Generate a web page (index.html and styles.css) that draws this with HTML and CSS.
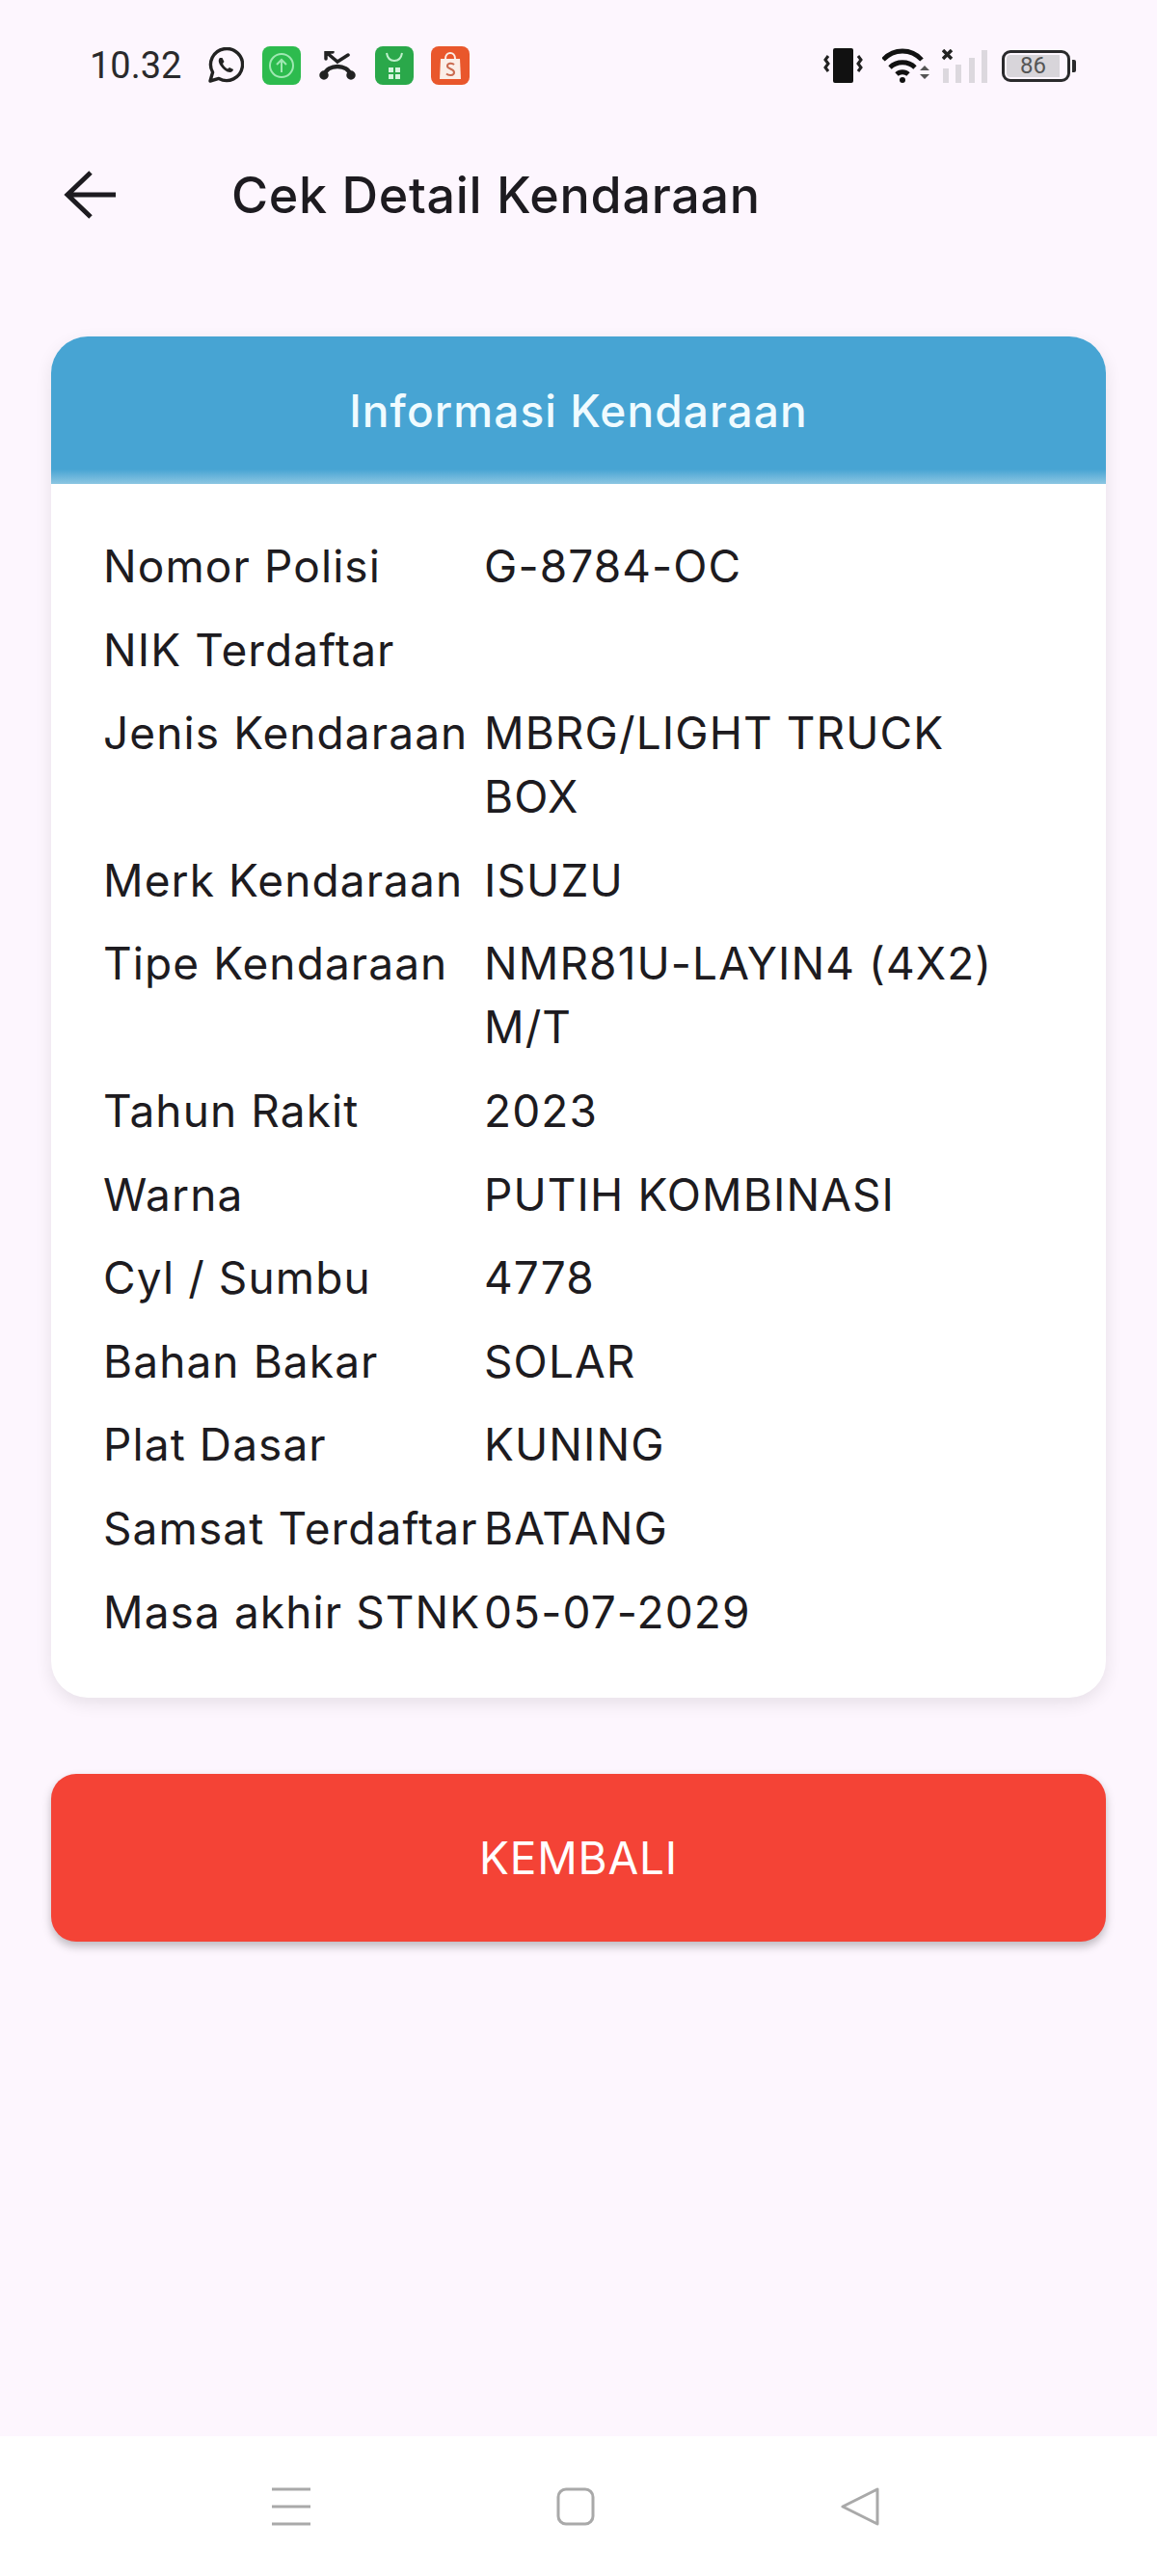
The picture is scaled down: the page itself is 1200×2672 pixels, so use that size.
FILE: index.html
```html
<!DOCTYPE html>
<html lang="id">
<head>
    <meta charset="UTF-8">
    <meta name="viewport" content="width=device-width, initial-scale=1.0">
    <title>Cek Detail Kendaraan</title>
    <link rel="stylesheet" href="styles.css">
</head>
<body>

    <!-- Status bar -->
    <div class="status-bar">
        <div class="status-left">
            <span class="clock">10.32</span>
            <svg class="ic-wa" viewBox="0 0 38 38" fill="none" stroke="#222" stroke-width="3.4">
                <path d="M3 35l2.6-9A16.5 16.5 0 1 1 12 32.400z" stroke-linejoin="round"/>
                <path d="M13 11c-2 2-1.500 5 1 8.500s6 6.500 9.500 6.500c2 0 3.500-1.500 3.500-3l-4-2-2 1.500c-2-1-4-3-5-5.500l1.500-2-2-4z" fill="#222" stroke="none"/>
            </svg>
            <svg class="ic-app" viewBox="0 0 40 40">
                <rect width="40" height="40" rx="8" fill="#2dbb4e"/>
                <circle cx="20" cy="20" r="12" fill="none" stroke="#9fe8b2" stroke-width="2"/>
                <path d="M20 27V14M15 19l5-5 5 5" fill="none" stroke="#9fe8b2" stroke-width="2"/>
            </svg>
            <svg class="ic-call" viewBox="0 0 40 30" fill="none" stroke="#222" stroke-width="3.500" stroke-linecap="round">
                <path d="M8 1l12 10L31 4M8 1v7M8 1h7"/>
                <path d="M6 25c2-6 8-9 14-9s12 3 14 9" stroke-width="4.500"/>
                <circle cx="6" cy="25" r="3" fill="#222"/>
                <circle cx="34" cy="25" r="3" fill="#222"/>
            </svg>
            <svg class="ic-app" viewBox="0 0 40 40">
                <rect width="40" height="40" rx="8" fill="#2aa84a"/>
                <path d="M12 7c1 6 4 8 8 8s7-2 8-8" fill="none" stroke="#bff0cc" stroke-width="2"/>
                <path d="M14 22h5v5h-5zM21 22h5v5h-5zM14 29h5v5h-5zM21 29h5v5h-5z" fill="#d6f5df"/>
            </svg>
            <svg class="ic-app" viewBox="0 0 40 40">
                <rect width="40" height="40" rx="8" fill="#e9572c"/>
                <path d="M10 13h20l1 21H9z" fill="#fbeee8"/>
                <path d="M15 13c0-8 10-8 10 0" fill="none" stroke="#fbeee8" stroke-width="2"/>
                <path d="M24 19c-2-2-7-2-7 1.500s7 2.500 7 6.500-6 3.500-8 1.500" fill="none" stroke="#c9694e" stroke-width="2"/>
            </svg>
        </div>
        <div class="status-right">
            <svg class="ic-vib" viewBox="0 0 41 36">
                <rect x="10" y="0" width="21" height="36" rx="2" fill="#111"/>
                <path d="M5 8l-3 4 3 4-3 4 3 4M36 8l3 4-3 4 3 4-3 4" fill="none" stroke="#222" stroke-width="3"/>
            </svg>
            <svg class="ic-wifi" viewBox="0 0 50 36" fill="none" stroke="#111" stroke-width="4.800">
                <path d="M1 12c11-12 29-12 40 0M8 20c7-7 19-7 26 0M15 27c3-3 9-3 12 0"/>
                <circle cx="21" cy="33" r="3" fill="#111" stroke="none"/>
                <path d="M39 23l5-5 5 5zM39 27l5 5 5-5z" fill="#555" stroke="none"/>
            </svg>
            <svg class="ic-signal" viewBox="0 0 48 35">
                <path d="M1 1l9 9M10 1l-9 9" stroke="#222" stroke-width="3.500" fill="none"/>
                <path d="M1 20h6v15H1zM14 16h6v19h-6zM28 9h6v26h-6zM41 1h6v34h-6z" fill="#dcd8de"/>
            </svg>
            <div class="battery">
                <div class="battery-body"><span class="battery-level">86</span></div>
                <div class="battery-tip"></div>
            </div>
        </div>
    </div>

    <!-- App bar -->
    <div class="app-bar">
        <svg class="back-arrow" viewBox="0 0 54 50" fill="none" stroke="#1d1b20" stroke-width="5">
            <path d="M54 25H4M28 2L4 25l24 23"/>
        </svg>
        <h1 class="page-title">Cek Detail Kendaraan</h1>
    </div>

    <main class="content">
        <div class="card">
            <div class="card-header">Informasi Kendaraan</div>
            <div class="card-body">
                <div class="info-row"><span class="info-label">Nomor Polisi</span><span class="info-value">G-8784-OC</span></div>
                <div class="info-row"><span class="info-label">NIK Terdaftar</span><span class="info-value"></span></div>
                <div class="info-row"><span class="info-label">Jenis Kendaraan</span><span class="info-value">MBRG/LIGHT TRUCK BOX</span></div>
                <div class="info-row"><span class="info-label">Merk Kendaraan</span><span class="info-value">ISUZU</span></div>
                <div class="info-row"><span class="info-label">Tipe Kendaraan</span><span class="info-value">NMR81U-LAYIN4 (4X2) M/T</span></div>
                <div class="info-row"><span class="info-label">Tahun Rakit</span><span class="info-value">2023</span></div>
                <div class="info-row"><span class="info-label">Warna</span><span class="info-value">PUTIH KOMBINASI</span></div>
                <div class="info-row"><span class="info-label">Cyl / Sumbu</span><span class="info-value">4778</span></div>
                <div class="info-row"><span class="info-label">Bahan Bakar</span><span class="info-value">SOLAR</span></div>
                <div class="info-row"><span class="info-label">Plat Dasar</span><span class="info-value">KUNING</span></div>
                <div class="info-row"><span class="info-label">Samsat Terdaftar</span><span class="info-value">BATANG</span></div>
                <div class="info-row"><span class="info-label">Masa akhir STNK</span><span class="info-value">05-07-2029</span></div>
            </div>
        </div>

        <button class="btn-back">KEMBALI</button>
    </main>

    <!-- Navigasi bawah -->
    <div class="nav-bar">
        <svg class="nav-icon" viewBox="0 0 40 40" fill="none" stroke="#a9a9a9" stroke-width="3">
            <path d="M0 2h40M0 20h40M0 38h40"/>
        </svg>
        <svg class="nav-icon" viewBox="0 0 40 40" fill="none" stroke="#a9a9a9" stroke-width="3">
            <rect x="2" y="2" width="36" height="36" rx="8"/>
        </svg>
        <svg class="nav-icon" viewBox="0 0 40 40" fill="none" stroke="#a9a9a9" stroke-width="3" stroke-linejoin="round">
            <path d="M38 2v36L2 20z"/>
        </svg>
    </div>

</body>
</html>
```

FILE: styles.css
```css
* {
    box-sizing: border-box;
}

body {
    margin: 0;
    height: 2672px;
    display: flex;
    flex-direction: column;
    background-color: #fdf6fe;
    color: #1d1b20;
    font-family: Inter, Roboto, sans-serif;
}

.status-bar {
    height: 110px;
    padding: 26px 84px 0 93px;
    display: flex;
    justify-content: space-between;
    align-items: center;
}

.status-left,
.status-right {
    display: flex;
    align-items: center;
}

.clock {
    font-family: Roboto, sans-serif;
    font-size: 38px;
    color: #2a2a2c;
    width: 122px;
}

.status-left svg {
    margin-right: 18.500px;
}

.ic-wa {
    width: 38px;
    height: 38px;
}

.ic-app {
    width: 40px;
    height: 40px;
}

.ic-call {
    width: 40px;
    height: 30px;
}

.ic-vib {
    width: 41px;
    height: 36px;
    margin-right: 20px;
}

.ic-wifi {
    width: 50px;
    height: 36px;
    margin-right: 12px;
}

.ic-signal {
    width: 48px;
    height: 35px;
    margin-right: 14px;
}

.battery {
    display: flex;
    align-items: center;
}

.battery-body {
    width: 71px;
    height: 33px;
    border: 3px solid #2a2a2c;
    border-radius: 9px;
    padding: 2px;
}

.battery-level {
    display: block;
    width: 55px;
    height: 23px;
    background-color: #d8d5da;
    border-radius: 4px 0 0 4px;
    font-family: Roboto, sans-serif;
    font-size: 24px;
    line-height: 23px;
    color: #555;
    text-align: center;
}

.battery-tip {
    width: 4px;
    height: 13px;
    margin-left: 2px;
    background-color: #2a2a2c;
    border-radius: 0 2px 2px 0;
}

.app-bar {
    height: 184px;
    padding: 0 66px;
    display: flex;
    align-items: center;
}

.back-arrow {
    width: 54px;
    height: 50px;
    margin-right: 120px;
}

.page-title {
    margin: 0;
    font-size: 52px;
    font-weight: 500;
    letter-spacing: 0.7px;
}

.content {
    flex: 1;
    padding: 55px 53px 0 53px;
}

.card {
    background-color: #fff;
    border-radius: 38px;
    box-shadow: 0 6px 18px rgba(0, 0, 0, 0.09);
    overflow: hidden;
}

.card-header {
    height: 153px;
    display: flex;
    align-items: center;
    justify-content: center;
    background: linear-gradient(#47a4d3 90%, #8cc6e2);
    color: #f0fbff;
    font-size: 46px;
    font-weight: 500;
    letter-spacing: 1.100px;
}

.card-body {
    padding: 52px 91px 56px 54px;
    display: flex;
    flex-direction: column;
    gap: 20.600px;
}

.info-row {
    display: flex;
    font-size: 46px;
    line-height: 66px;
    letter-spacing: 1.100px;
    color: #1d1b20;
}

.info-label {
    width: 395px;
    flex-shrink: 0;
    white-space: nowrap;
}

.info-value {
    flex: 1;
    min-height: 66px;
}

.btn-back {
    display: block;
    width: 100%;
    height: 174px;
    margin-top: 79px;
    border: none;
    border-radius: 26px;
    background-color: #f44336;
    color: #fff;
    font-family: inherit;
    font-size: 46px;
    letter-spacing: 0.800px;
    box-shadow: 0 5px 10px rgba(0, 0, 0, 0.25);
}

.nav-bar {
    height: 145px;
    padding: 0 288px 0 282px;
    background-color: #fff;
    display: flex;
    justify-content: space-between;
    align-items: center;
}

.nav-icon {
    width: 40px;
    height: 40px;
}
```
